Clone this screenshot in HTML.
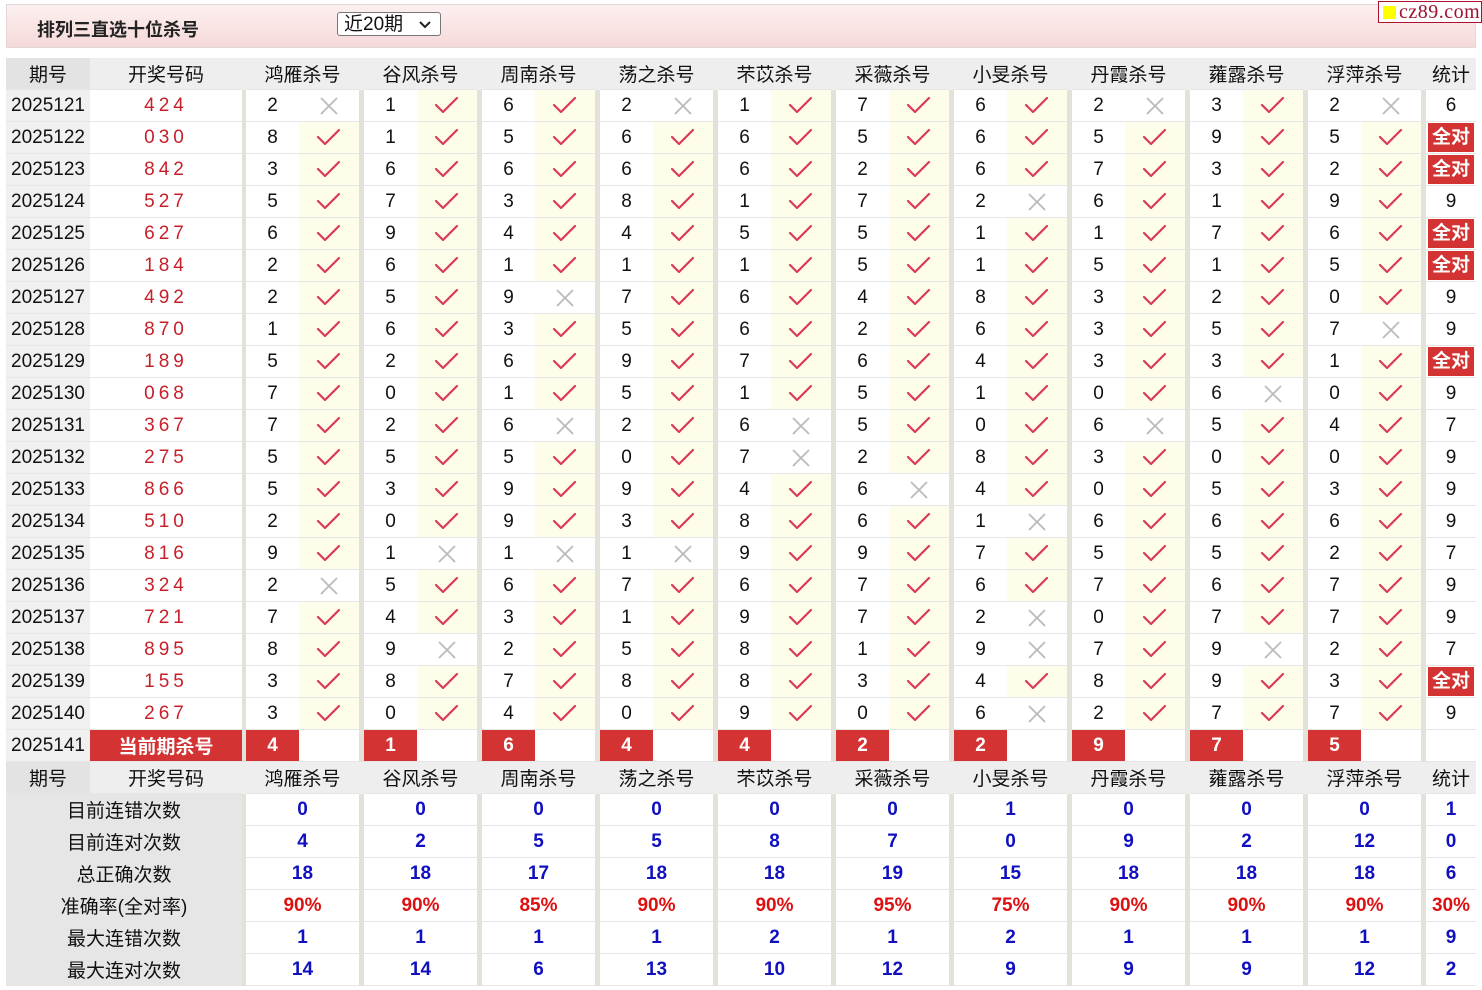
<!DOCTYPE html><html><head><meta charset="utf-8"><style>
body{margin:0;width:1482px;height:990px;background:#fff;font-family:"Liberation Sans","Noto Sans CJK SC",sans-serif;position:relative;overflow:hidden}
.bar{position:absolute;left:6px;top:4px;width:1468px;height:42px;border:1px solid #e3d6d6;background:linear-gradient(#fdf0f0,#f6d9d9)}
.tt{position:absolute;left:30px;top:11px;font-size:18px;font-weight:bold;color:#222}
.sel{position:absolute;left:330px;top:7px;width:104px;height:24px;border:1px solid #777;border-radius:3px;background:#fff;font-size:19px;line-height:24px;box-sizing:border-box;padding-left:6px;color:#111}
.sel svg{position:absolute;right:8px;top:7px}
.logo{position:absolute;left:1378px;top:1px;width:102px;height:20px;border:1px solid #b01030;background:#fff;font-family:"Liberation Serif",serif;font-size:20px;color:#a01030;line-height:20px;letter-spacing:0.5px;white-space:nowrap;overflow:hidden}
.logo i{display:inline-block;width:13px;height:13px;background:#ffff00;margin:0 3px 0 4px;vertical-align:-1px}
table{position:absolute;left:6px;top:58px;border-collapse:collapse;table-layout:fixed;font-size:19px;color:#111}
td{height:31px;padding:0;border-bottom:1px solid #e6e6e6;text-align:center;white-space:nowrap;overflow:hidden}
td.s{background:#e2e2da;border-bottom:none}
tr.h td{background:#eeeeee}
tr.h td.q{background:#e3e3e3}
td.q{background:#f0f0f0}
td.k{color:#c8202a;letter-spacing:4px}
td.y{background:#fdfde9}
td.y svg,td.n svg{display:block;margin:auto}
td.r{background:#d33333;color:#fff;font-weight:bold}
td.a span{display:inline-block;background:#d33333;color:#fff;font-weight:bold;width:46px;height:29px;line-height:29px}
td.l{background:#e6e6e6}
td.b{color:#1010c0;font-weight:bold}
td.p{color:#dd1111;font-weight:bold}
</style></head><body>
<svg width="0" height="0" style="position:absolute"><defs>
<g id="c"><path d="M2 9 L9 16 L23 2" fill="none" stroke="#da3a55" stroke-width="2.2" stroke-linecap="round" stroke-linejoin="round"/></g>
<g id="x"><path d="M2 2 L18 18 M18 2 L2 18" stroke="#bbbbbb" stroke-width="1.8"/></g>
</defs></svg>
<div class="bar"><div class="tt">排列三直选十位杀号</div><div class="sel">近20期<svg width="14" height="9"><path d="M2 2 L7 7 L12 2" fill="none" stroke="#222" stroke-width="2"/></svg></div></div>
<div class="logo"><i></i>cz89.com</div>
<table>
<colgroup><col style="width:84px"><col style="width:152px"><col style="width:4px">
<col style="width:53px"><col style="width:60px"><col style="width:5px"><col style="width:53px"><col style="width:60px"><col style="width:5px"><col style="width:53px"><col style="width:60px"><col style="width:5px"><col style="width:53px"><col style="width:60px"><col style="width:5px"><col style="width:53px"><col style="width:60px"><col style="width:5px"><col style="width:53px"><col style="width:60px"><col style="width:5px"><col style="width:53px"><col style="width:60px"><col style="width:5px"><col style="width:53px"><col style="width:60px"><col style="width:5px"><col style="width:53px"><col style="width:60px"><col style="width:5px"><col style="width:53px"><col style="width:60px"><col style="width:5px"><col style="width:50px"></colgroup>
<tr class="h"><td class="q">期号</td><td>开奖号码</td><td class="s"></td><td colspan="2">鸿雁杀号</td><td class="s"></td><td colspan="2">谷风杀号</td><td class="s"></td><td colspan="2">周南杀号</td><td class="s"></td><td colspan="2">荡之杀号</td><td class="s"></td><td colspan="2">芣苡杀号</td><td class="s"></td><td colspan="2">采薇杀号</td><td class="s"></td><td colspan="2">小旻杀号</td><td class="s"></td><td colspan="2">丹霞杀号</td><td class="s"></td><td colspan="2">蕹露杀号</td><td class="s"></td><td colspan="2">浮萍杀号</td><td class="s"></td><td>统计</td></tr>
<tr><td class="q">2025121</td><td class="k">424</td><td class="s"></td><td>2</td><td class="n"><svg width="20" height="20"><use href="#x"/></svg></td><td class="s"></td><td>1</td><td class="y"><svg width="26" height="19"><use href="#c"/></svg></td><td class="s"></td><td>6</td><td class="y"><svg width="26" height="19"><use href="#c"/></svg></td><td class="s"></td><td>2</td><td class="n"><svg width="20" height="20"><use href="#x"/></svg></td><td class="s"></td><td>1</td><td class="y"><svg width="26" height="19"><use href="#c"/></svg></td><td class="s"></td><td>7</td><td class="y"><svg width="26" height="19"><use href="#c"/></svg></td><td class="s"></td><td>6</td><td class="y"><svg width="26" height="19"><use href="#c"/></svg></td><td class="s"></td><td>2</td><td class="n"><svg width="20" height="20"><use href="#x"/></svg></td><td class="s"></td><td>3</td><td class="y"><svg width="26" height="19"><use href="#c"/></svg></td><td class="s"></td><td>2</td><td class="n"><svg width="20" height="20"><use href="#x"/></svg></td><td class="s"></td><td>6</td></tr>
<tr><td class="q">2025122</td><td class="k">030</td><td class="s"></td><td>8</td><td class="y"><svg width="26" height="19"><use href="#c"/></svg></td><td class="s"></td><td>1</td><td class="y"><svg width="26" height="19"><use href="#c"/></svg></td><td class="s"></td><td>5</td><td class="y"><svg width="26" height="19"><use href="#c"/></svg></td><td class="s"></td><td>6</td><td class="y"><svg width="26" height="19"><use href="#c"/></svg></td><td class="s"></td><td>6</td><td class="y"><svg width="26" height="19"><use href="#c"/></svg></td><td class="s"></td><td>5</td><td class="y"><svg width="26" height="19"><use href="#c"/></svg></td><td class="s"></td><td>6</td><td class="y"><svg width="26" height="19"><use href="#c"/></svg></td><td class="s"></td><td>5</td><td class="y"><svg width="26" height="19"><use href="#c"/></svg></td><td class="s"></td><td>9</td><td class="y"><svg width="26" height="19"><use href="#c"/></svg></td><td class="s"></td><td>5</td><td class="y"><svg width="26" height="19"><use href="#c"/></svg></td><td class="s"></td><td class="a"><span>全对</span></td></tr>
<tr><td class="q">2025123</td><td class="k">842</td><td class="s"></td><td>3</td><td class="y"><svg width="26" height="19"><use href="#c"/></svg></td><td class="s"></td><td>6</td><td class="y"><svg width="26" height="19"><use href="#c"/></svg></td><td class="s"></td><td>6</td><td class="y"><svg width="26" height="19"><use href="#c"/></svg></td><td class="s"></td><td>6</td><td class="y"><svg width="26" height="19"><use href="#c"/></svg></td><td class="s"></td><td>6</td><td class="y"><svg width="26" height="19"><use href="#c"/></svg></td><td class="s"></td><td>2</td><td class="y"><svg width="26" height="19"><use href="#c"/></svg></td><td class="s"></td><td>6</td><td class="y"><svg width="26" height="19"><use href="#c"/></svg></td><td class="s"></td><td>7</td><td class="y"><svg width="26" height="19"><use href="#c"/></svg></td><td class="s"></td><td>3</td><td class="y"><svg width="26" height="19"><use href="#c"/></svg></td><td class="s"></td><td>2</td><td class="y"><svg width="26" height="19"><use href="#c"/></svg></td><td class="s"></td><td class="a"><span>全对</span></td></tr>
<tr><td class="q">2025124</td><td class="k">527</td><td class="s"></td><td>5</td><td class="y"><svg width="26" height="19"><use href="#c"/></svg></td><td class="s"></td><td>7</td><td class="y"><svg width="26" height="19"><use href="#c"/></svg></td><td class="s"></td><td>3</td><td class="y"><svg width="26" height="19"><use href="#c"/></svg></td><td class="s"></td><td>8</td><td class="y"><svg width="26" height="19"><use href="#c"/></svg></td><td class="s"></td><td>1</td><td class="y"><svg width="26" height="19"><use href="#c"/></svg></td><td class="s"></td><td>7</td><td class="y"><svg width="26" height="19"><use href="#c"/></svg></td><td class="s"></td><td>2</td><td class="n"><svg width="20" height="20"><use href="#x"/></svg></td><td class="s"></td><td>6</td><td class="y"><svg width="26" height="19"><use href="#c"/></svg></td><td class="s"></td><td>1</td><td class="y"><svg width="26" height="19"><use href="#c"/></svg></td><td class="s"></td><td>9</td><td class="y"><svg width="26" height="19"><use href="#c"/></svg></td><td class="s"></td><td>9</td></tr>
<tr><td class="q">2025125</td><td class="k">627</td><td class="s"></td><td>6</td><td class="y"><svg width="26" height="19"><use href="#c"/></svg></td><td class="s"></td><td>9</td><td class="y"><svg width="26" height="19"><use href="#c"/></svg></td><td class="s"></td><td>4</td><td class="y"><svg width="26" height="19"><use href="#c"/></svg></td><td class="s"></td><td>4</td><td class="y"><svg width="26" height="19"><use href="#c"/></svg></td><td class="s"></td><td>5</td><td class="y"><svg width="26" height="19"><use href="#c"/></svg></td><td class="s"></td><td>5</td><td class="y"><svg width="26" height="19"><use href="#c"/></svg></td><td class="s"></td><td>1</td><td class="y"><svg width="26" height="19"><use href="#c"/></svg></td><td class="s"></td><td>1</td><td class="y"><svg width="26" height="19"><use href="#c"/></svg></td><td class="s"></td><td>7</td><td class="y"><svg width="26" height="19"><use href="#c"/></svg></td><td class="s"></td><td>6</td><td class="y"><svg width="26" height="19"><use href="#c"/></svg></td><td class="s"></td><td class="a"><span>全对</span></td></tr>
<tr><td class="q">2025126</td><td class="k">184</td><td class="s"></td><td>2</td><td class="y"><svg width="26" height="19"><use href="#c"/></svg></td><td class="s"></td><td>6</td><td class="y"><svg width="26" height="19"><use href="#c"/></svg></td><td class="s"></td><td>1</td><td class="y"><svg width="26" height="19"><use href="#c"/></svg></td><td class="s"></td><td>1</td><td class="y"><svg width="26" height="19"><use href="#c"/></svg></td><td class="s"></td><td>1</td><td class="y"><svg width="26" height="19"><use href="#c"/></svg></td><td class="s"></td><td>5</td><td class="y"><svg width="26" height="19"><use href="#c"/></svg></td><td class="s"></td><td>1</td><td class="y"><svg width="26" height="19"><use href="#c"/></svg></td><td class="s"></td><td>5</td><td class="y"><svg width="26" height="19"><use href="#c"/></svg></td><td class="s"></td><td>1</td><td class="y"><svg width="26" height="19"><use href="#c"/></svg></td><td class="s"></td><td>5</td><td class="y"><svg width="26" height="19"><use href="#c"/></svg></td><td class="s"></td><td class="a"><span>全对</span></td></tr>
<tr><td class="q">2025127</td><td class="k">492</td><td class="s"></td><td>2</td><td class="y"><svg width="26" height="19"><use href="#c"/></svg></td><td class="s"></td><td>5</td><td class="y"><svg width="26" height="19"><use href="#c"/></svg></td><td class="s"></td><td>9</td><td class="n"><svg width="20" height="20"><use href="#x"/></svg></td><td class="s"></td><td>7</td><td class="y"><svg width="26" height="19"><use href="#c"/></svg></td><td class="s"></td><td>6</td><td class="y"><svg width="26" height="19"><use href="#c"/></svg></td><td class="s"></td><td>4</td><td class="y"><svg width="26" height="19"><use href="#c"/></svg></td><td class="s"></td><td>8</td><td class="y"><svg width="26" height="19"><use href="#c"/></svg></td><td class="s"></td><td>3</td><td class="y"><svg width="26" height="19"><use href="#c"/></svg></td><td class="s"></td><td>2</td><td class="y"><svg width="26" height="19"><use href="#c"/></svg></td><td class="s"></td><td>0</td><td class="y"><svg width="26" height="19"><use href="#c"/></svg></td><td class="s"></td><td>9</td></tr>
<tr><td class="q">2025128</td><td class="k">870</td><td class="s"></td><td>1</td><td class="y"><svg width="26" height="19"><use href="#c"/></svg></td><td class="s"></td><td>6</td><td class="y"><svg width="26" height="19"><use href="#c"/></svg></td><td class="s"></td><td>3</td><td class="y"><svg width="26" height="19"><use href="#c"/></svg></td><td class="s"></td><td>5</td><td class="y"><svg width="26" height="19"><use href="#c"/></svg></td><td class="s"></td><td>6</td><td class="y"><svg width="26" height="19"><use href="#c"/></svg></td><td class="s"></td><td>2</td><td class="y"><svg width="26" height="19"><use href="#c"/></svg></td><td class="s"></td><td>6</td><td class="y"><svg width="26" height="19"><use href="#c"/></svg></td><td class="s"></td><td>3</td><td class="y"><svg width="26" height="19"><use href="#c"/></svg></td><td class="s"></td><td>5</td><td class="y"><svg width="26" height="19"><use href="#c"/></svg></td><td class="s"></td><td>7</td><td class="n"><svg width="20" height="20"><use href="#x"/></svg></td><td class="s"></td><td>9</td></tr>
<tr><td class="q">2025129</td><td class="k">189</td><td class="s"></td><td>5</td><td class="y"><svg width="26" height="19"><use href="#c"/></svg></td><td class="s"></td><td>2</td><td class="y"><svg width="26" height="19"><use href="#c"/></svg></td><td class="s"></td><td>6</td><td class="y"><svg width="26" height="19"><use href="#c"/></svg></td><td class="s"></td><td>9</td><td class="y"><svg width="26" height="19"><use href="#c"/></svg></td><td class="s"></td><td>7</td><td class="y"><svg width="26" height="19"><use href="#c"/></svg></td><td class="s"></td><td>6</td><td class="y"><svg width="26" height="19"><use href="#c"/></svg></td><td class="s"></td><td>4</td><td class="y"><svg width="26" height="19"><use href="#c"/></svg></td><td class="s"></td><td>3</td><td class="y"><svg width="26" height="19"><use href="#c"/></svg></td><td class="s"></td><td>3</td><td class="y"><svg width="26" height="19"><use href="#c"/></svg></td><td class="s"></td><td>1</td><td class="y"><svg width="26" height="19"><use href="#c"/></svg></td><td class="s"></td><td class="a"><span>全对</span></td></tr>
<tr><td class="q">2025130</td><td class="k">068</td><td class="s"></td><td>7</td><td class="y"><svg width="26" height="19"><use href="#c"/></svg></td><td class="s"></td><td>0</td><td class="y"><svg width="26" height="19"><use href="#c"/></svg></td><td class="s"></td><td>1</td><td class="y"><svg width="26" height="19"><use href="#c"/></svg></td><td class="s"></td><td>5</td><td class="y"><svg width="26" height="19"><use href="#c"/></svg></td><td class="s"></td><td>1</td><td class="y"><svg width="26" height="19"><use href="#c"/></svg></td><td class="s"></td><td>5</td><td class="y"><svg width="26" height="19"><use href="#c"/></svg></td><td class="s"></td><td>1</td><td class="y"><svg width="26" height="19"><use href="#c"/></svg></td><td class="s"></td><td>0</td><td class="y"><svg width="26" height="19"><use href="#c"/></svg></td><td class="s"></td><td>6</td><td class="n"><svg width="20" height="20"><use href="#x"/></svg></td><td class="s"></td><td>0</td><td class="y"><svg width="26" height="19"><use href="#c"/></svg></td><td class="s"></td><td>9</td></tr>
<tr><td class="q">2025131</td><td class="k">367</td><td class="s"></td><td>7</td><td class="y"><svg width="26" height="19"><use href="#c"/></svg></td><td class="s"></td><td>2</td><td class="y"><svg width="26" height="19"><use href="#c"/></svg></td><td class="s"></td><td>6</td><td class="n"><svg width="20" height="20"><use href="#x"/></svg></td><td class="s"></td><td>2</td><td class="y"><svg width="26" height="19"><use href="#c"/></svg></td><td class="s"></td><td>6</td><td class="n"><svg width="20" height="20"><use href="#x"/></svg></td><td class="s"></td><td>5</td><td class="y"><svg width="26" height="19"><use href="#c"/></svg></td><td class="s"></td><td>0</td><td class="y"><svg width="26" height="19"><use href="#c"/></svg></td><td class="s"></td><td>6</td><td class="n"><svg width="20" height="20"><use href="#x"/></svg></td><td class="s"></td><td>5</td><td class="y"><svg width="26" height="19"><use href="#c"/></svg></td><td class="s"></td><td>4</td><td class="y"><svg width="26" height="19"><use href="#c"/></svg></td><td class="s"></td><td>7</td></tr>
<tr><td class="q">2025132</td><td class="k">275</td><td class="s"></td><td>5</td><td class="y"><svg width="26" height="19"><use href="#c"/></svg></td><td class="s"></td><td>5</td><td class="y"><svg width="26" height="19"><use href="#c"/></svg></td><td class="s"></td><td>5</td><td class="y"><svg width="26" height="19"><use href="#c"/></svg></td><td class="s"></td><td>0</td><td class="y"><svg width="26" height="19"><use href="#c"/></svg></td><td class="s"></td><td>7</td><td class="n"><svg width="20" height="20"><use href="#x"/></svg></td><td class="s"></td><td>2</td><td class="y"><svg width="26" height="19"><use href="#c"/></svg></td><td class="s"></td><td>8</td><td class="y"><svg width="26" height="19"><use href="#c"/></svg></td><td class="s"></td><td>3</td><td class="y"><svg width="26" height="19"><use href="#c"/></svg></td><td class="s"></td><td>0</td><td class="y"><svg width="26" height="19"><use href="#c"/></svg></td><td class="s"></td><td>0</td><td class="y"><svg width="26" height="19"><use href="#c"/></svg></td><td class="s"></td><td>9</td></tr>
<tr><td class="q">2025133</td><td class="k">866</td><td class="s"></td><td>5</td><td class="y"><svg width="26" height="19"><use href="#c"/></svg></td><td class="s"></td><td>3</td><td class="y"><svg width="26" height="19"><use href="#c"/></svg></td><td class="s"></td><td>9</td><td class="y"><svg width="26" height="19"><use href="#c"/></svg></td><td class="s"></td><td>9</td><td class="y"><svg width="26" height="19"><use href="#c"/></svg></td><td class="s"></td><td>4</td><td class="y"><svg width="26" height="19"><use href="#c"/></svg></td><td class="s"></td><td>6</td><td class="n"><svg width="20" height="20"><use href="#x"/></svg></td><td class="s"></td><td>4</td><td class="y"><svg width="26" height="19"><use href="#c"/></svg></td><td class="s"></td><td>0</td><td class="y"><svg width="26" height="19"><use href="#c"/></svg></td><td class="s"></td><td>5</td><td class="y"><svg width="26" height="19"><use href="#c"/></svg></td><td class="s"></td><td>3</td><td class="y"><svg width="26" height="19"><use href="#c"/></svg></td><td class="s"></td><td>9</td></tr>
<tr><td class="q">2025134</td><td class="k">510</td><td class="s"></td><td>2</td><td class="y"><svg width="26" height="19"><use href="#c"/></svg></td><td class="s"></td><td>0</td><td class="y"><svg width="26" height="19"><use href="#c"/></svg></td><td class="s"></td><td>9</td><td class="y"><svg width="26" height="19"><use href="#c"/></svg></td><td class="s"></td><td>3</td><td class="y"><svg width="26" height="19"><use href="#c"/></svg></td><td class="s"></td><td>8</td><td class="y"><svg width="26" height="19"><use href="#c"/></svg></td><td class="s"></td><td>6</td><td class="y"><svg width="26" height="19"><use href="#c"/></svg></td><td class="s"></td><td>1</td><td class="n"><svg width="20" height="20"><use href="#x"/></svg></td><td class="s"></td><td>6</td><td class="y"><svg width="26" height="19"><use href="#c"/></svg></td><td class="s"></td><td>6</td><td class="y"><svg width="26" height="19"><use href="#c"/></svg></td><td class="s"></td><td>6</td><td class="y"><svg width="26" height="19"><use href="#c"/></svg></td><td class="s"></td><td>9</td></tr>
<tr><td class="q">2025135</td><td class="k">816</td><td class="s"></td><td>9</td><td class="y"><svg width="26" height="19"><use href="#c"/></svg></td><td class="s"></td><td>1</td><td class="n"><svg width="20" height="20"><use href="#x"/></svg></td><td class="s"></td><td>1</td><td class="n"><svg width="20" height="20"><use href="#x"/></svg></td><td class="s"></td><td>1</td><td class="n"><svg width="20" height="20"><use href="#x"/></svg></td><td class="s"></td><td>9</td><td class="y"><svg width="26" height="19"><use href="#c"/></svg></td><td class="s"></td><td>9</td><td class="y"><svg width="26" height="19"><use href="#c"/></svg></td><td class="s"></td><td>7</td><td class="y"><svg width="26" height="19"><use href="#c"/></svg></td><td class="s"></td><td>5</td><td class="y"><svg width="26" height="19"><use href="#c"/></svg></td><td class="s"></td><td>5</td><td class="y"><svg width="26" height="19"><use href="#c"/></svg></td><td class="s"></td><td>2</td><td class="y"><svg width="26" height="19"><use href="#c"/></svg></td><td class="s"></td><td>7</td></tr>
<tr><td class="q">2025136</td><td class="k">324</td><td class="s"></td><td>2</td><td class="n"><svg width="20" height="20"><use href="#x"/></svg></td><td class="s"></td><td>5</td><td class="y"><svg width="26" height="19"><use href="#c"/></svg></td><td class="s"></td><td>6</td><td class="y"><svg width="26" height="19"><use href="#c"/></svg></td><td class="s"></td><td>7</td><td class="y"><svg width="26" height="19"><use href="#c"/></svg></td><td class="s"></td><td>6</td><td class="y"><svg width="26" height="19"><use href="#c"/></svg></td><td class="s"></td><td>7</td><td class="y"><svg width="26" height="19"><use href="#c"/></svg></td><td class="s"></td><td>6</td><td class="y"><svg width="26" height="19"><use href="#c"/></svg></td><td class="s"></td><td>7</td><td class="y"><svg width="26" height="19"><use href="#c"/></svg></td><td class="s"></td><td>6</td><td class="y"><svg width="26" height="19"><use href="#c"/></svg></td><td class="s"></td><td>7</td><td class="y"><svg width="26" height="19"><use href="#c"/></svg></td><td class="s"></td><td>9</td></tr>
<tr><td class="q">2025137</td><td class="k">721</td><td class="s"></td><td>7</td><td class="y"><svg width="26" height="19"><use href="#c"/></svg></td><td class="s"></td><td>4</td><td class="y"><svg width="26" height="19"><use href="#c"/></svg></td><td class="s"></td><td>3</td><td class="y"><svg width="26" height="19"><use href="#c"/></svg></td><td class="s"></td><td>1</td><td class="y"><svg width="26" height="19"><use href="#c"/></svg></td><td class="s"></td><td>9</td><td class="y"><svg width="26" height="19"><use href="#c"/></svg></td><td class="s"></td><td>7</td><td class="y"><svg width="26" height="19"><use href="#c"/></svg></td><td class="s"></td><td>2</td><td class="n"><svg width="20" height="20"><use href="#x"/></svg></td><td class="s"></td><td>0</td><td class="y"><svg width="26" height="19"><use href="#c"/></svg></td><td class="s"></td><td>7</td><td class="y"><svg width="26" height="19"><use href="#c"/></svg></td><td class="s"></td><td>7</td><td class="y"><svg width="26" height="19"><use href="#c"/></svg></td><td class="s"></td><td>9</td></tr>
<tr><td class="q">2025138</td><td class="k">895</td><td class="s"></td><td>8</td><td class="y"><svg width="26" height="19"><use href="#c"/></svg></td><td class="s"></td><td>9</td><td class="n"><svg width="20" height="20"><use href="#x"/></svg></td><td class="s"></td><td>2</td><td class="y"><svg width="26" height="19"><use href="#c"/></svg></td><td class="s"></td><td>5</td><td class="y"><svg width="26" height="19"><use href="#c"/></svg></td><td class="s"></td><td>8</td><td class="y"><svg width="26" height="19"><use href="#c"/></svg></td><td class="s"></td><td>1</td><td class="y"><svg width="26" height="19"><use href="#c"/></svg></td><td class="s"></td><td>9</td><td class="n"><svg width="20" height="20"><use href="#x"/></svg></td><td class="s"></td><td>7</td><td class="y"><svg width="26" height="19"><use href="#c"/></svg></td><td class="s"></td><td>9</td><td class="n"><svg width="20" height="20"><use href="#x"/></svg></td><td class="s"></td><td>2</td><td class="y"><svg width="26" height="19"><use href="#c"/></svg></td><td class="s"></td><td>7</td></tr>
<tr><td class="q">2025139</td><td class="k">155</td><td class="s"></td><td>3</td><td class="y"><svg width="26" height="19"><use href="#c"/></svg></td><td class="s"></td><td>8</td><td class="y"><svg width="26" height="19"><use href="#c"/></svg></td><td class="s"></td><td>7</td><td class="y"><svg width="26" height="19"><use href="#c"/></svg></td><td class="s"></td><td>8</td><td class="y"><svg width="26" height="19"><use href="#c"/></svg></td><td class="s"></td><td>8</td><td class="y"><svg width="26" height="19"><use href="#c"/></svg></td><td class="s"></td><td>3</td><td class="y"><svg width="26" height="19"><use href="#c"/></svg></td><td class="s"></td><td>4</td><td class="y"><svg width="26" height="19"><use href="#c"/></svg></td><td class="s"></td><td>8</td><td class="y"><svg width="26" height="19"><use href="#c"/></svg></td><td class="s"></td><td>9</td><td class="y"><svg width="26" height="19"><use href="#c"/></svg></td><td class="s"></td><td>3</td><td class="y"><svg width="26" height="19"><use href="#c"/></svg></td><td class="s"></td><td class="a"><span>全对</span></td></tr>
<tr><td class="q">2025140</td><td class="k">267</td><td class="s"></td><td>3</td><td class="y"><svg width="26" height="19"><use href="#c"/></svg></td><td class="s"></td><td>0</td><td class="y"><svg width="26" height="19"><use href="#c"/></svg></td><td class="s"></td><td>4</td><td class="y"><svg width="26" height="19"><use href="#c"/></svg></td><td class="s"></td><td>0</td><td class="y"><svg width="26" height="19"><use href="#c"/></svg></td><td class="s"></td><td>9</td><td class="y"><svg width="26" height="19"><use href="#c"/></svg></td><td class="s"></td><td>0</td><td class="y"><svg width="26" height="19"><use href="#c"/></svg></td><td class="s"></td><td>6</td><td class="n"><svg width="20" height="20"><use href="#x"/></svg></td><td class="s"></td><td>2</td><td class="y"><svg width="26" height="19"><use href="#c"/></svg></td><td class="s"></td><td>7</td><td class="y"><svg width="26" height="19"><use href="#c"/></svg></td><td class="s"></td><td>7</td><td class="y"><svg width="26" height="19"><use href="#c"/></svg></td><td class="s"></td><td>9</td></tr>
<tr><td class="q">2025141</td><td class="r">当前期杀号</td><td class="s"></td><td class="r">4</td><td></td><td class="s"></td><td class="r">1</td><td></td><td class="s"></td><td class="r">6</td><td></td><td class="s"></td><td class="r">4</td><td></td><td class="s"></td><td class="r">4</td><td></td><td class="s"></td><td class="r">2</td><td></td><td class="s"></td><td class="r">2</td><td></td><td class="s"></td><td class="r">9</td><td></td><td class="s"></td><td class="r">7</td><td></td><td class="s"></td><td class="r">5</td><td></td><td class="s"></td><td></td></tr>
<tr class="h"><td class="q">期号</td><td>开奖号码</td><td class="s"></td><td colspan="2">鸿雁杀号</td><td class="s"></td><td colspan="2">谷风杀号</td><td class="s"></td><td colspan="2">周南杀号</td><td class="s"></td><td colspan="2">荡之杀号</td><td class="s"></td><td colspan="2">芣苡杀号</td><td class="s"></td><td colspan="2">采薇杀号</td><td class="s"></td><td colspan="2">小旻杀号</td><td class="s"></td><td colspan="2">丹霞杀号</td><td class="s"></td><td colspan="2">蕹露杀号</td><td class="s"></td><td colspan="2">浮萍杀号</td><td class="s"></td><td>统计</td></tr>
<tr><td class="l" colspan="2">目前连错次数</td><td class="s"></td><td class="b" colspan="2">0</td><td class="s"></td><td class="b" colspan="2">0</td><td class="s"></td><td class="b" colspan="2">0</td><td class="s"></td><td class="b" colspan="2">0</td><td class="s"></td><td class="b" colspan="2">0</td><td class="s"></td><td class="b" colspan="2">0</td><td class="s"></td><td class="b" colspan="2">1</td><td class="s"></td><td class="b" colspan="2">0</td><td class="s"></td><td class="b" colspan="2">0</td><td class="s"></td><td class="b" colspan="2">0</td><td class="s"></td><td class="b">1</td></tr>
<tr><td class="l" colspan="2">目前连对次数</td><td class="s"></td><td class="b" colspan="2">4</td><td class="s"></td><td class="b" colspan="2">2</td><td class="s"></td><td class="b" colspan="2">5</td><td class="s"></td><td class="b" colspan="2">5</td><td class="s"></td><td class="b" colspan="2">8</td><td class="s"></td><td class="b" colspan="2">7</td><td class="s"></td><td class="b" colspan="2">0</td><td class="s"></td><td class="b" colspan="2">9</td><td class="s"></td><td class="b" colspan="2">2</td><td class="s"></td><td class="b" colspan="2">12</td><td class="s"></td><td class="b">0</td></tr>
<tr><td class="l" colspan="2">总正确次数</td><td class="s"></td><td class="b" colspan="2">18</td><td class="s"></td><td class="b" colspan="2">18</td><td class="s"></td><td class="b" colspan="2">17</td><td class="s"></td><td class="b" colspan="2">18</td><td class="s"></td><td class="b" colspan="2">18</td><td class="s"></td><td class="b" colspan="2">19</td><td class="s"></td><td class="b" colspan="2">15</td><td class="s"></td><td class="b" colspan="2">18</td><td class="s"></td><td class="b" colspan="2">18</td><td class="s"></td><td class="b" colspan="2">18</td><td class="s"></td><td class="b">6</td></tr>
<tr><td class="l" colspan="2">准确率(全对率)</td><td class="s"></td><td class="p" colspan="2">90%</td><td class="s"></td><td class="p" colspan="2">90%</td><td class="s"></td><td class="p" colspan="2">85%</td><td class="s"></td><td class="p" colspan="2">90%</td><td class="s"></td><td class="p" colspan="2">90%</td><td class="s"></td><td class="p" colspan="2">95%</td><td class="s"></td><td class="p" colspan="2">75%</td><td class="s"></td><td class="p" colspan="2">90%</td><td class="s"></td><td class="p" colspan="2">90%</td><td class="s"></td><td class="p" colspan="2">90%</td><td class="s"></td><td class="p">30%</td></tr>
<tr><td class="l" colspan="2">最大连错次数</td><td class="s"></td><td class="b" colspan="2">1</td><td class="s"></td><td class="b" colspan="2">1</td><td class="s"></td><td class="b" colspan="2">1</td><td class="s"></td><td class="b" colspan="2">1</td><td class="s"></td><td class="b" colspan="2">2</td><td class="s"></td><td class="b" colspan="2">1</td><td class="s"></td><td class="b" colspan="2">2</td><td class="s"></td><td class="b" colspan="2">1</td><td class="s"></td><td class="b" colspan="2">1</td><td class="s"></td><td class="b" colspan="2">1</td><td class="s"></td><td class="b">9</td></tr>
<tr><td class="l" colspan="2">最大连对次数</td><td class="s"></td><td class="b" colspan="2">14</td><td class="s"></td><td class="b" colspan="2">14</td><td class="s"></td><td class="b" colspan="2">6</td><td class="s"></td><td class="b" colspan="2">13</td><td class="s"></td><td class="b" colspan="2">10</td><td class="s"></td><td class="b" colspan="2">12</td><td class="s"></td><td class="b" colspan="2">9</td><td class="s"></td><td class="b" colspan="2">9</td><td class="s"></td><td class="b" colspan="2">9</td><td class="s"></td><td class="b" colspan="2">12</td><td class="s"></td><td class="b">2</td></tr>
</table>
</body></html>
